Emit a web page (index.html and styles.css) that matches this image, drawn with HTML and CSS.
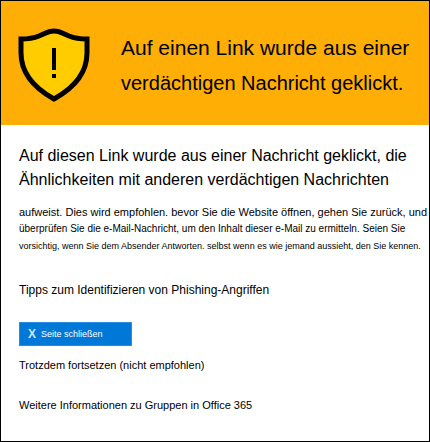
FILE: index.html
```html
<!DOCTYPE html>
<html lang="de">
<head>
<meta charset="utf-8">
<meta name="viewport" content="width=device-width, initial-scale=1">
<title>Verdächtiger Link</title>
<link rel="stylesheet" href="styles.css">
</head>
<body>
<main class="warning">
  <header class="banner">
    <svg class="shield" viewBox="0 0 72 76" aria-hidden="true">
      <path d="M36 4C30 4 26 7 21 9C16 11 10 12 3 12V26C3 48 18 62 36 72C54 62 69 48 69 26V12C62 12 56 11 51 9C46 7 42 4 36 4Z" fill="#ffcc00" stroke="#000" stroke-width="5"/>
      <path d="M34 21h4v22h-4zM34 47h4v4h-4z"/>
    </svg>
    <h1 class="title">Auf einen Link wurde aus einer<br><span class="subtitle">verdächtigen Nachricht geklickt.</span></h1>
  </header>
  <div class="content">
    <h2 class="lead">Auf diesen Link wurde aus einer Nachricht geklickt, die<br>Ähnlichkeiten mit anderen verdächtigen Nachrichten</h2>
    <p class="advice">aufweist. Dies wird empfohlen. bevor Sie die Website öffnen, gehen Sie zurück, und<br><span class="small">überprüfen Sie die e-Mail-Nachricht, um den Inhalt dieser e-Mail zu ermitteln. Seien Sie</span><br><span class="fine">vorsichtig, wenn Sie dem Absender Antworten. selbst wenn es wie jemand aussieht, den Sie kennen.</span></p>
    <a class="link tips" href="#tipps">Tipps zum Identifizieren von Phishing-Angriffen</a>
    <button class="close" type="button"><span class="cross">X</span>Seite schließen</button>
    <a class="link proceed" href="#fortsetzen">Trotzdem fortsetzen (nicht empfohlen)</a>
    <a class="link" href="#office">Weitere Informationen zu Gruppen in Office 365</a>
  </div>
</main>
</body>
</html>
```
FILE: styles.css
```css
* {
  box-sizing: border-box;
}

body {
  margin: 0;
  font-family: "Liberation Sans", Arial, sans-serif;
  color: #000;
  background: #fff;
}

.warning {
  min-height: 100vh;
  border: 1px solid #000;
}

.banner {
  display: flex;
  align-items: center;
  gap: 31px;
  padding: 26px 16px 22px 17px;
  background: #ffae06;
}

.shield {
  flex: none;
  width: 72px;
  height: 76px;
}

.title {
  margin: 0;
  font-size: 21px;
  font-weight: 400;
  line-height: 35px;
  white-space: nowrap;
}

.subtitle {
  font-size: 20px;
}

.content {
  display: flex;
  flex-direction: column;
  align-items: flex-start;
  padding: 19px 12px 24px 18px;
}

.lead {
  margin: 0 0 12px;
  font-size: 16px;
  font-weight: 400;
  line-height: 24px;
  white-space: nowrap;
}

.advice {
  margin: 0 0 28px;
  font-size: 11px;
  line-height: 16px;
  white-space: nowrap;
}

.small {
  font-size: 10px;
}

.fine {
  font-size: 9px;
}

.link {
  font-size: 11px;
  line-height: 16px;
  color: inherit;
  text-decoration: none;
}

.tips {
  margin-bottom: 24px;
  font-size: 12px;
}

.close {
  display: flex;
  align-items: center;
  gap: 5px;
  width: 113px;
  height: 24px;
  margin: 0 0 11px;
  padding: 0 8px;
  border: 1px solid #2b8ce0;
  background: #0078d7;
  color: #fff;
  font-family: inherit;
  font-size: 9px;
}

.cross {
  font-size: 12px;
  font-weight: 700;
  color: #cfe6fa;
}

.proceed {
  margin-bottom: 24px;
}
```
